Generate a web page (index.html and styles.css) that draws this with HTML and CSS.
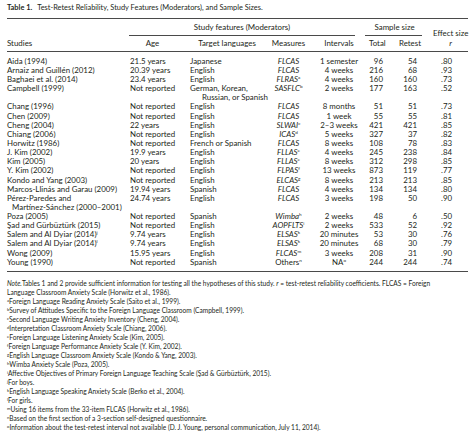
FILE: index.html
```html
<!DOCTYPE html>
<html>
<head>
<meta charset="utf-8">
<link rel="stylesheet" href="styles.css">
</head>
<body>
<div class="page">
  <div class="title"><b>Table 1.</b><span class="ttext">Test-Retest Reliability, Study Features (Moderators), and Sample Sizes.</span></div>
  <table class="tbl">
    <colgroup>
      <col class="c1"><col class="c2"><col class="c3"><col class="c4"><col class="c5"><col class="c6"><col class="c7"><col class="c8">
    </colgroup>
    <thead>
      <tr class="h1">
        <th></th>
        <th colspan="4"><div class="span-study">Study features (Moderators)</div></th>
        <th colspan="2"><div class="span-sample">Sample size</div></th>
        <th rowspan="2" class="eff">Effect size<br><i>r</i></th>
      </tr>
      <tr class="h2">
        <th class="l">Studies</th>
        <th class="hage">Age</th>
        <th class="htarget">Target languages</th>
        <th class="ctr">Measures</th>
        <th class="ctr">Intervals</th>
        <th class="htotal">Total</th>
        <th class="hretest">Retest</th>
      </tr>
    </thead>
    <tbody>
      <tr class="first"><td class="st">Aida (1994)</td><td>21.5 years</td><td class="tl">Japanese</td><td class="m"><i>FLCAS</i></td><td class="iv">1 semester</td><td class="n1">96</td><td class="n2">54</td><td class="r">.80</td></tr>
      <tr><td class="st">Arnaiz and Guillén (2012)</td><td>20.39 years</td><td class="tl">English</td><td class="m"><i>FLCAS</i></td><td class="iv">4 weeks</td><td class="n1">216</td><td class="n2">68</td><td class="r">.93</td></tr>
      <tr><td class="st">Baghaei et al. (2014)</td><td>23.4 years</td><td class="tl">English</td><td class="m"><i>FLRAS</i><sup>a</sup></td><td class="iv">4 weeks</td><td class="n1">160</td><td class="n2">160</td><td class="r">.73</td></tr>
      <tr><td class="st">Campbell (1999)</td><td>Not reported</td><td class="tl">German, Korean,<br><span class="cont">Russian, or Spanish</span></td><td class="m"><i>SASFLC</i><sup>b</sup></td><td class="iv">2 weeks</td><td class="n1">177</td><td class="n2">163</td><td class="r">.52</td></tr>
      <tr><td class="st">Chang (1996)</td><td>Not reported</td><td class="tl">English</td><td class="m"><i>FLCAS</i></td><td class="iv">8 months</td><td class="n1">51</td><td class="n2">51</td><td class="r">.73</td></tr>
      <tr><td class="st">Chen (2009)</td><td>Not reported</td><td class="tl">English</td><td class="m"><i>FLCAS</i></td><td class="iv">1 week</td><td class="n1">55</td><td class="n2">55</td><td class="r">.81</td></tr>
      <tr><td class="st">Cheng (2004)</td><td>22 years</td><td class="tl">English</td><td class="m"><i>SLWAI</i><sup>c</sup></td><td class="iv">2–3 weeks</td><td class="n1">421</td><td class="n2">421</td><td class="r">.85</td></tr>
      <tr><td class="st">Chiang (2006)</td><td>Not reported</td><td class="tl">English</td><td class="m"><i>ICAS</i><sup>d</sup></td><td class="iv">5 weeks</td><td class="n1">327</td><td class="n2">37</td><td class="r">.82</td></tr>
      <tr><td class="st">Horwitz (1986)</td><td>Not reported</td><td class="tl">French or Spanish</td><td class="m"><i>FLCAS</i></td><td class="iv">8 weeks</td><td class="n1">108</td><td class="n2">78</td><td class="r">.83</td></tr>
      <tr><td class="st">J. Kim (2002)</td><td>19.9 years</td><td class="tl">English</td><td class="m"><i>FLLAS</i><sup>e</sup></td><td class="iv">4 weeks</td><td class="n1">245</td><td class="n2">238</td><td class="r">.84</td></tr>
      <tr><td class="st">Kim (2005)</td><td>20 years</td><td class="tl">English</td><td class="m"><i>FLLAS</i><sup>e</sup></td><td class="iv">8 weeks</td><td class="n1">312</td><td class="n2">298</td><td class="r">.85</td></tr>
      <tr><td class="st">Y. Kim (2002)</td><td>Not reported</td><td class="tl">English</td><td class="m"><i>FLPAS</i><sup>f</sup></td><td class="iv">13 weeks</td><td class="n1">873</td><td class="n2">119</td><td class="r">.77</td></tr>
      <tr><td class="st">Kondo and Yang (2003)</td><td>Not reported</td><td class="tl">English</td><td class="m"><i>ELCAS</i><sup>g</sup></td><td class="iv">8 weeks</td><td class="n1">213</td><td class="n2">213</td><td class="r">.85</td></tr>
      <tr><td class="st">Marcos-Llinás and Garau (2009)</td><td>19.94 years</td><td class="tl">Spanish</td><td class="m"><i>FLCAS</i></td><td class="iv">4 weeks</td><td class="n1">134</td><td class="n2">134</td><td class="r">.80</td></tr>
      <tr><td class="st">Pérez-Paredes and<br><span class="cont2">Martínez-Sánchez (2000–2001)</span></td><td>24.74 years</td><td class="tl">English</td><td class="m"><i>FLCAS</i></td><td class="iv">3 weeks</td><td class="n1">198</td><td class="n2">50</td><td class="r">.90</td></tr>
      <tr><td class="st">Poza (2005)</td><td>Not reported</td><td class="tl">Spanish</td><td class="m"><i>Wimba</i><sup>h</sup></td><td class="iv">2 weeks</td><td class="n1">48</td><td class="n2">6</td><td class="r">.50</td></tr>
      <tr><td class="st">Şad and Gürbüztürk (2015)</td><td>Not reported</td><td class="tl">English</td><td class="m"><i>AOPFLTS</i><sup>i</sup></td><td class="iv">2 weeks</td><td class="n1">533</td><td class="n2">52</td><td class="r">.92</td></tr>
      <tr><td class="st">Salem and Al Dyiar (2014)<sup>j</sup></td><td>9.74 years</td><td class="tl">English</td><td class="m"><i>ELSAS</i><sup>k</sup></td><td class="iv">20 minutes</td><td class="n1">53</td><td class="n2">30</td><td class="r">.76</td></tr>
      <tr><td class="st">Salem and Al Dyiar (2014)<sup>l</sup></td><td>9.74 years</td><td class="tl">English</td><td class="m"><i>ELSAS</i><sup>k</sup></td><td class="iv">20 minutes</td><td class="n1">68</td><td class="n2">30</td><td class="r">.79</td></tr>
      <tr><td class="st">Wong (2009)</td><td>15.95 years</td><td class="tl">English</td><td class="m"><i>FLCAS</i><sup>m</sup></td><td class="iv">3 weeks</td><td class="n1">208</td><td class="n2">31</td><td class="r">.90</td></tr>
      <tr class="last"><td class="st">Young (1990)</td><td>Not reported</td><td class="tl">Spanish</td><td class="m">Others<sup>n</sup></td><td class="iv">NA<sup>o</sup></td><td class="n1">244</td><td class="n2">244</td><td class="r">.74</td></tr>
    </tbody>
  </table>
  <div class="notes">
    <p><i>Note.</i>Tables 1 and 2 provide sufficient information for testing all the hypotheses of this study. <i>r</i> = test-retest reliability coefficients. FLCAS = Foreign<br>Language Classroom Anxiety Scale (Horwitz et al., 1986).</p>
    <p><sup>a</sup>Foreign Language Reading Anxiety Scale (Saito et al., 1999).</p>
    <p><sup>b</sup>Survey of Attitudes Specific to the Foreign Language Classroom (Campbell, 1999).</p>
    <p><sup>c</sup>Second Language Writing Anxiety Inventory (Cheng, 2004).</p>
    <p><sup>d</sup>Interpretation Classroom Anxiety Scale (Chiang, 2006).</p>
    <p><sup>e</sup>Foreign Language Listening Anxiety Scale (Kim, 2005).</p>
    <p><sup>f</sup>Foreign Language Performance Anxiety Scale (Y. Kim, 2002).</p>
    <p><sup>g</sup>English Language Classroom Anxiety Scale (Kondo &amp; Yang, 2003).</p>
    <p><sup>h</sup>Wimba Anxiety Scale (Poza, 2005).</p>
    <p><sup>i</sup>Affective Objectives of Primary Foreign Language Teaching Scale (Şad &amp; Gürbüztürk, 2015).</p>
    <p><sup>j</sup>For boys.</p>
    <p><sup>k</sup>English Language Speaking Anxiety Scale (Berko et al., 2004).</p>
    <p><sup>l</sup>For girls.</p>
    <p><sup>m</sup>Using 16 items from the 33-item FLCAS (Horwitz et al., 1986).</p>
    <p><sup>n</sup>Based on the first section of a 3-section self-designed questionnaire.</p>
    <p><sup>o</sup>Information about the test-retest interval not available (D. J. Young, personal communication, July 11, 2014).</p>
  </div>
</div>
</body>
</html>
```
FILE: styles.css
```css
html, body {
  margin: 0;
  padding: 0;
  background: #ffffff;
}
body {
  font-family: Lato, "Open Sans", "DejaVu Sans", sans-serif;
  color: #231f20;
}
.page {
  padding: 3px 6px 0 7px;
  width: 461px;
}
.title {
  font-size: 7.4px;
  line-height: 10px;
  height: 10px;
  white-space: nowrap;
  margin-bottom: 5px;
}
.title b {
  font-weight: 700;
}
.ttext {
  margin-left: 5px;
}
.tbl {
  width: 461px;
  table-layout: fixed;
  border-collapse: collapse;
  border-top: 1px solid #4a4a4a;
  border-bottom: 1px solid #4a4a4a;
  font-size: 7.9px;
}
.c1 { width: 123px; }
.c2 { width: 60px; }
.c3 { width: 78px; }
.c4 { width: 41px; }
.c5 { width: 60px; }
.c6 { width: 18px; }
.c7 { width: 34px; }
.c8 { width: 47px; }
th, td {
  padding: 0;
  font-weight: 400;
  line-height: 9.14px;
  vertical-align: top;
  white-space: nowrap;
}
.h1 th {
  padding-top: 4px;
  text-align: center;
}
.span-study {
  margin-left: -1px;
  margin-right: 14px;
  padding-bottom: 3px;
  border-bottom: 1px solid #4a4a4a;
}
.span-sample {
  margin-left: -4px;
  margin-right: -1px;
  padding-bottom: 3px;
  border-bottom: 1px solid #4a4a4a;
  padding-left: 2px;
}
.eff {
  vertical-align: bottom;
  padding-left: 12px;
  line-height: 10px;
  padding-bottom: 3px;
  border-bottom: 1px solid #4a4a4a;
}
.h2 th {
  padding-top: 3px;
  padding-bottom: 3px;
  border-bottom: 1px solid #4a4a4a;
  text-align: center;
}
.h2 th.l { text-align: left; }
.h2 th.hage { padding-right: 15px; }
.h2 th.htarget { padding-right: 4px; }
.h2 th.htotal { text-align: right; padding-right: 5px; }
.h2 th.hretest { text-align: right; padding-right: 0; }
.ctr { text-align: center; }
tbody tr.first td { padding-top: 4.4px; }
tbody tr.last td { padding-bottom: 4.4px; }
.cont { padding-left: 12px; }
.cont2 { padding-left: 5px; }
td.m { text-align: center; }
td.iv { text-align: center; }
td.n1 { text-align: right; padding-right: 4px; }
td.n2 { text-align: right; padding-right: 4px; }
td.r { text-align: right; padding-right: 16px; }
sup {
  font-size: 4.6px;
  line-height: 0;
  vertical-align: 0;
  position: relative;
  top: -3px;
  font-style: normal;
}
.notes {
  margin-top: 7px;
  font-size: 6.6px;
}
.notes p {
  margin: 0;
  line-height: 9px;
  white-space: nowrap;
}
.notes sup {
  font-size: 4.2px;
  top: -2.5px;
}
```
